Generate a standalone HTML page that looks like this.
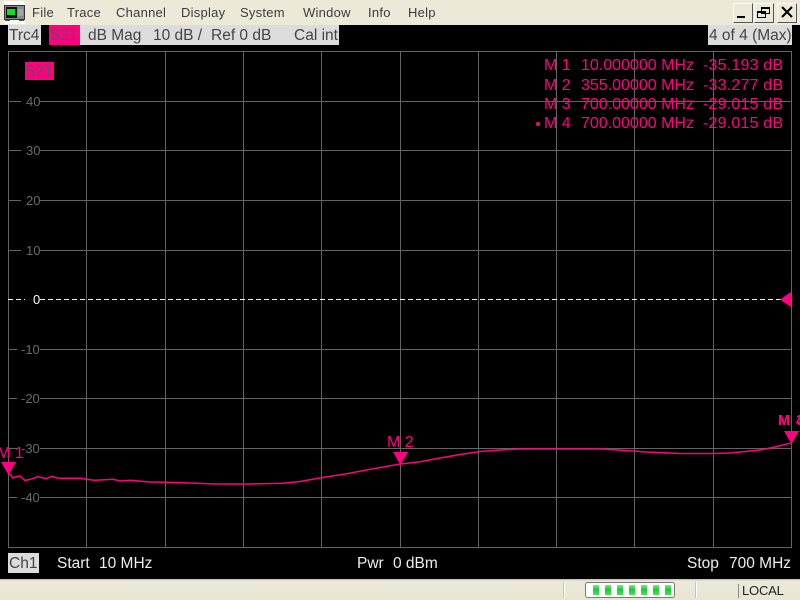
<!DOCTYPE html>
<html><head><meta charset="utf-8">
<style>
html,body{margin:0;padding:0;width:800px;height:600px;overflow:hidden;background:#000}
body{position:relative;font-family:"Liberation Sans",sans-serif}
.t{position:absolute;white-space:pre;line-height:20px;font-size:15.5px}
.bg{position:absolute}
.m{position:absolute;font-size:13px;line-height:16px;color:#3c3c3c;top:5px;white-space:pre;letter-spacing:.25px}
.a{position:absolute;font-size:13px;line-height:14px;color:#6a6a6a;white-space:pre}
.p{color:#ff0080;font-size:16px}
.v{letter-spacing:.2px}
.g{color:#5c5c5c}
.w{color:#eee;font-size:15.5px}
.btn{position:absolute;top:3px;width:20px;height:20px;background:#ece9d8;box-sizing:border-box;border:1px solid;border-color:#fff #555 #555 #fff}
</style></head><body>

<div class="bg" style="left:0;top:0;width:800px;height:25px;background:#ece9d8"></div>
<svg style="position:absolute;left:4px;top:1px" width="21" height="23" viewBox="0 0 21 23">
<rect width="21" height="23" fill="#fff"/>
<rect x="0" y="4" width="21" height="15" fill="#333"/>
<rect x="1" y="5" width="19" height="13" fill="#8a8a8a"/>
<rect x="2" y="6" width="11" height="11" fill="#111"/>
<rect x="3" y="8" width="8" height="6" fill="#10e020"/>
<rect x="14" y="8" width="5" height="7" fill="#a4a4a4"/>
<rect x="1" y="19" width="5" height="1" fill="#555"/><rect x="15" y="19" width="5" height="1" fill="#555"/>
</svg>
<div class="m" style="left:32px">File</div>
<div class="m" style="left:67px">Trace</div>
<div class="m" style="left:116px">Channel</div>
<div class="m" style="left:181px">Display</div>
<div class="m" style="left:240px">System</div>
<div class="m" style="left:303px">Window</div>
<div class="m" style="left:368px">Info</div>
<div class="m" style="left:408px">Help</div>

<div class="btn" style="left:733px"><svg width="18" height="18" style="display:block"><rect x="3" y="12" width="8" height="2" fill="#000"/></svg></div>
<div class="btn" style="left:754px"><svg width="18" height="18" style="display:block"><path d="M6.5 3.5h8v6h-8zM6.5 4.5h8M2.5 7.5h8v6h-8zM2.5 8.5h8" fill="#ece9d8" stroke="#000"/></svg></div>
<div class="btn" style="left:777px"><svg width="18" height="18" style="display:block"><path d="M4 3l10 10M14 3L4 13" stroke="#000" stroke-width="2"/></svg></div>

<div class="bg" style="left:8px;top:25px;width:33px;height:20px;background:#dcdcdc"></div>
<div class="bg" style="left:49px;top:25px;width:31px;height:20px;background:#ff0080"></div>
<div class="bg" style="left:80px;top:25px;width:259px;height:20px;background:#dcdcdc"></div>
<div class="bg" style="left:708px;top:25px;width:84px;height:20px;background:#dcdcdc"></div>
<div class="t" style="left:9px;top:26px;color:#444">Trc4</div>
<div class="t" style="left:50px;top:26px;color:#555">S21</div>
<div class="t" style="left:88px;top:26px;color:#444">dB Mag</div>
<div class="t" style="left:153px;top:26px;color:#444">10 dB /</div>
<div class="t" style="left:211px;top:26px;color:#444">Ref 0 dB</div>
<div class="t" style="left:294px;top:26px;color:#444">Cal int</div>
<div class="t" style="left:709px;top:26px;color:#444">4 of 4 (Max)</div>

<svg style="position:absolute;left:0;top:0" width="800" height="600">
<g fill="none" stroke="#646464" stroke-width="1" shape-rendering="crispEdges">
<rect x="8.5" y="51.5" width="783" height="496"/>
<path d="M86.5 52V547M165.5 52V547M243.5 52V547M321.5 52V547M400.5 52V547M478.5 52V547M556.5 52V547M634.5 52V547M713.5 52V547"/>
<path d="M8 101.5H21M40 101.5H791M8 150.5H21M40 150.5H791M8 200.5H21M40 200.5H791M8 250.5H21M40 250.5H791M8 349.5H17M40 349.5H791M8 398.5H17M40 398.5H791M8 448.5H17M40 448.5H791M8 497.5H17M40 497.5H791"/>
<path d="M8 299.5H25M40 299.5H782" stroke="#fff" stroke-dasharray="5 3"/>
</g>
<polyline fill="none" stroke="#ff0080" stroke-width="1.5" points="9,473 13,478 17,476.5 20,476 25,480.5 30,479.3 38,476.7 46,478.7 52,476.3 57,478 62,478.3 80,478.3 90,479.7 95,480.3 105,479.7 113,479.3 120,481 130,480.3 150,482 165,482.3 190,483 215,484 250,484 283,483.3 300,481.5 321,477.7 345,474 370,469.3 400,464 420,461.7 440,458 460,454.5 480,451.5 500,450 520,449 540,449 602,449 626,450.5 646,452 665,452.7 680,453.5 713,453.5 730,453 745,451.5 760,450 775,447 791,443"/>
<polygon fill="#ff0080" points="1,462 16,462 8.5,475"/>
<polygon fill="#ff0080" points="393,452 408,452 400.5,465"/>
<polygon fill="#ff0080" points="784,431 799,431 791.5,444"/>
<polygon fill="#ff0080" points="780,299.5 791,292 791,307"/>
</svg>

<div class="a" style="left:26px;top:95px">40</div>
<div class="a" style="left:26px;top:144px">30</div>
<div class="a" style="left:26px;top:194px">20</div>
<div class="a" style="left:26px;top:244px">10</div>
<div class="a" style="left:33px;top:293px;color:#fff">0</div>
<div class="a" style="left:21px;top:343px">-10</div>
<div class="a" style="left:21px;top:392px">-20</div>
<div class="a" style="left:21px;top:442px">-30</div>
<div class="a" style="left:21px;top:491px">-40</div>

<div class="bg" style="left:25px;top:62px;width:29px;height:18px;background:#ff0080"></div>
<div class="t" style="left:25px;top:62px;color:#555">S21</div>

<div class="t p" style="left:544px;top:56px">M 1</div><div class="t p" style="left:581px;top:56px">10.000000 MHz</div><div class="t p v" style="left:703px;top:56px">-35.193 dB</div>
<div class="t p" style="left:544px;top:76px">M 2</div><div class="t p" style="left:581px;top:76px">355.00000 MHz</div><div class="t p v" style="left:703px;top:76px">-33.277 dB</div>
<div class="t p" style="left:544px;top:95px">M 3</div><div class="t p" style="left:581px;top:95px">700.00000 MHz</div><div class="t p v" style="left:703px;top:95px">-29.015 dB</div>
<div class="bg" style="left:536px;top:122px;width:4px;height:4px;border-radius:2px;background:#ff0080"></div>
<div class="t p" style="left:544px;top:114px">M 4</div><div class="t p" style="left:581px;top:114px">700.00000 MHz</div><div class="t p v" style="left:703px;top:114px">-29.015 dB</div>

<div class="t p" style="left:-3px;top:444px">M 1</div>
<div class="t p" style="left:387px;top:433px">M 2</div>
<div class="t p" style="left:778px;top:411px;font-weight:bold;font-size:14.5px;word-spacing:2px">M 3</div>
<div class="t p" style="left:778px;top:411px;font-weight:bold;font-size:14.5px;word-spacing:2px">M 4</div>

<div class="bg" style="left:8px;top:553px;width:31px;height:20px;background:#dcdcdc"></div>
<div class="t" style="left:9px;top:554px;color:#444">Ch1</div>
<div class="t w" style="left:57px;top:554px">Start</div>
<div class="t w" style="left:99px;top:554px">10 MHz</div>
<div class="t w" style="left:357px;top:554px">Pwr</div>
<div class="t w" style="left:393px;top:554px">0 dBm</div>
<div class="t w" style="left:687px;top:554px">Stop</div>
<div class="t w" style="left:729px;top:554px">700 MHz</div>

<div class="bg" style="left:0;top:579px;width:800px;height:21px;background:linear-gradient(#b8b6a8 0,#ece9d8 2px,#e8e5d3 100%)"></div>
<div class="bg" style="left:563px;top:582px;width:1px;height:16px;background:#c4c2b4;box-shadow:1px 0 #fff"></div>
<div class="bg" style="left:695px;top:582px;width:1px;height:16px;background:#c4c2b4;box-shadow:1px 0 #fff"></div>
<div class="bg" style="left:738px;top:584px;width:1px;height:14px;background:#888"></div>
<svg style="position:absolute;left:585px;top:582px" width="92" height="16">
<defs><linearGradient id="gr" x1="0" y1="0" x2="0" y2="1"><stop offset="0" stop-color="#7fe890"/><stop offset=".45" stop-color="#18cc30"/><stop offset="1" stop-color="#50dc64"/></linearGradient></defs>
<rect x=".5" y=".5" width="89" height="15" rx="2" fill="#fff" stroke="#7a7a7a"/>
<rect x="8" y="3" width="6" height="10" fill="url(#gr)"/>
<rect x="20" y="3" width="6" height="10" fill="url(#gr)"/>
<rect x="32" y="3" width="6" height="10" fill="url(#gr)"/>
<rect x="44" y="3" width="6" height="10" fill="url(#gr)"/>
<rect x="56" y="3" width="6" height="10" fill="url(#gr)"/>
<rect x="68" y="3" width="6" height="10" fill="url(#gr)"/>
<rect x="80" y="3" width="6" height="10" fill="url(#gr)"/>
</svg>
<div class="m" style="left:742px;top:583px;color:#222;letter-spacing:-.2px">LOCAL</div>
</body></html>
